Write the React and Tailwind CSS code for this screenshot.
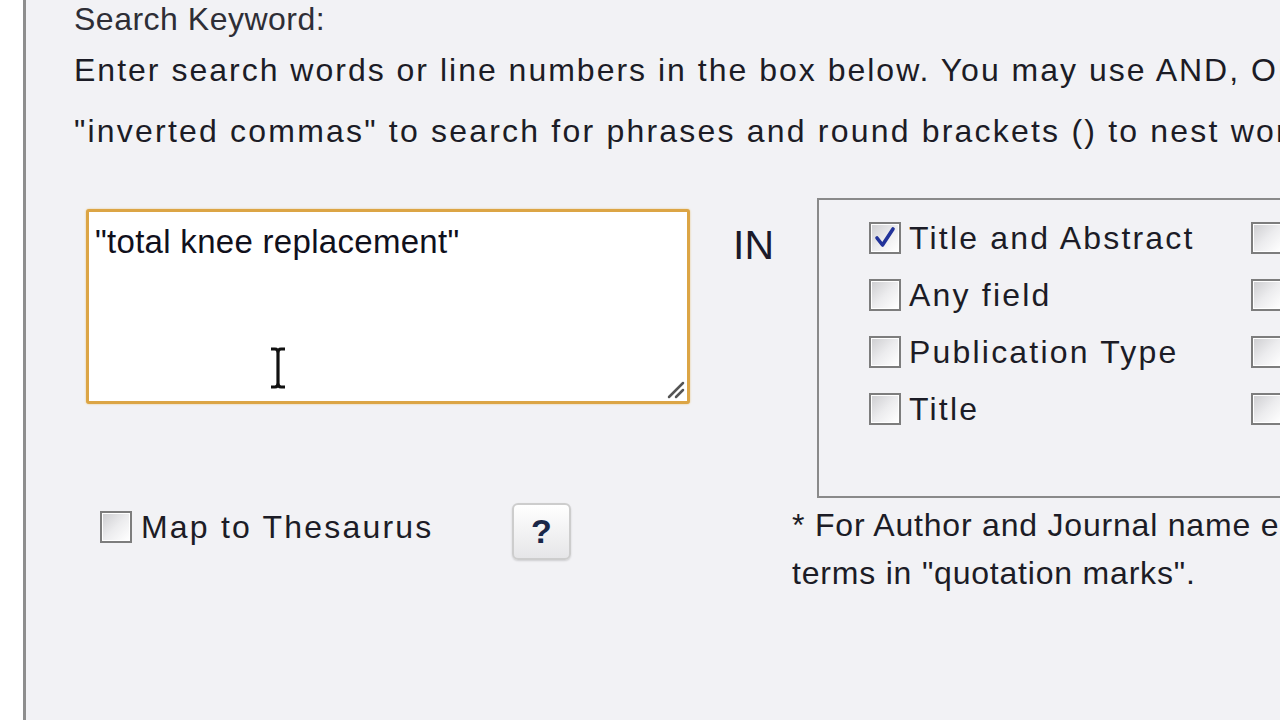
import React from "react";

const font = { fontFamily: '"Liberation Sans", Arial, sans-serif' };

function Box({ checked }) {
  return (
    <div className="w-[32px] h-[32px] shrink-0 border-2 border-[#7d7d7d] bg-white p-[1px]">
      <div className="relative w-full h-full bg-gradient-to-br from-[#cfcfd2] via-[#ececee] to-white">
        {checked && (
          <svg viewBox="0 0 26 26" className="absolute inset-0 w-full h-full">
            <path d="M5 13 L10.5 20 L21 4" fill="none" stroke="#22339a" strokeWidth="3.6" strokeLinecap="round" strokeLinejoin="round" />
          </svg>
        )}
      </div>
    </div>
  );
}

function Option({ label, checked }) {
  return (
    <div className="h-[57px] flex items-center">
      <Box checked={checked} />
      {label && <span className="ml-[8px] whitespace-nowrap">{label}</span>}
    </div>
  );
}

export default function App() {
  return (
    <div
      className="w-[1280px] h-[720px] overflow-hidden flex bg-[#f2f2f5] text-[#1c1c26] text-[32px] tracking-[2.2px]"
      style={font}
    >
      <div className="w-[26px] shrink-0 bg-white border-r-[3px] border-[#8e8e8e]" />
      <div className="flex-1 pl-[48px] min-w-0">
        <div className="leading-[38px] tracking-[0.5px] text-[#2e2e36] whitespace-nowrap">Search Keyword:</div>
        <div className="mt-[1.5px] leading-[61px] whitespace-nowrap">
          <div className="tracking-[2px]">
            Enter search words or line numbers in the box below. You may use AND, OR and NOT. Use
          </div>
          <div>"inverted commas" to search for phrases and round brackets () to nest words together.</div>
        </div>

        <div className="mt-[36px] flex items-start">
          <div className="ml-[12px] mt-[11px] relative w-[604px] h-[195px] shrink-0 bg-white border-[3px] border-[#dca545] rounded-[3px] shadow-[0_0_2px_#e8c27a]">
            <div className="pl-[6px] pt-[10px] text-[33px] leading-[40px] tracking-[0.3px] text-[#10101c] whitespace-nowrap">
              "total knee replacement"
            </div>
            <svg className="absolute left-[179px] top-[134px]" width="20" height="44" viewBox="0 0 20 44">
              <path d="M3 3 H7 Q10 3 10 7 V37 Q10 41 7 41 H3 M17 3 H13 Q10 3 10 7 M10 37 Q10 41 13 41 H17" fill="none" stroke="#111" strokeWidth="3.2" />
            </svg>
            <svg className="absolute right-[2px] bottom-[2px]" width="22" height="22" viewBox="0 0 22 22">
              <path d="M6 20 L20 6 M13 20 L20 13" stroke="#555" strokeWidth="2.5" strokeLinecap="round" />
            </svg>
          </div>

          <div className="ml-[43px] mt-[27px] text-[41px] leading-none tracking-[0px] text-[#1a1a2a]">IN</div>

          <div className="ml-[43px] w-[600px] h-[300px] shrink-0 border-2 border-[#8a8a8a] pl-[50px] pt-[10px] grid grid-cols-[382px_200px]">
            <div>
              <Option label="Title and Abstract" checked />
              <Option label="Any field" />
              <Option label="Publication Type" />
              <Option label="Title" />
            </div>
            <div>
              <Option label="Author" />
              <Option label="Journal" />
              <Option label="Keyword" />
              <Option label="Abstract" />
            </div>
          </div>
        </div>

        <div className="flex items-start">
          <div className="ml-[26px] mt-[9px] w-[412px] h-[40px] shrink-0 flex items-center">
            <Box />
            <span className="ml-[9px] whitespace-nowrap">Map to Thesaurus</span>
          </div>
          <div className="mt-[5px] w-[59px] h-[57px] shrink-0 flex items-center justify-center rounded-[6px] border-2 border-[#cdcdcd] bg-gradient-to-b from-white to-[#e6e6e8] shadow-[0_1px_2px_rgba(0,0,0,0.15)] text-[34px] font-bold tracking-[0px] text-[#1a2748]">
            ?
          </div>
          <div className="ml-[221px] mt-[3px] leading-[48px] tracking-[0.8px] whitespace-nowrap">
            <div>* For Author and Journal name entries, enclose</div>
            <div>terms in "quotation marks".</div>
          </div>
        </div>
      </div>
    </div>
  );
}
